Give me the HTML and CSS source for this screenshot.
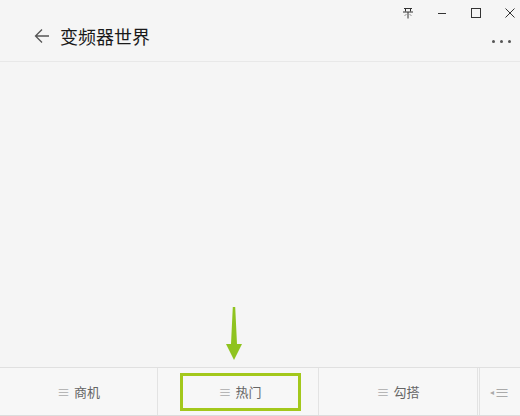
FILE: index.html
```html
<!DOCTYPE html>
<html lang="zh">
<head>
<meta charset="utf-8">
<link rel="stylesheet" href="styles.css">
</head>
<body>
<div class="window">
  <div class="titlebar">
    <span class="ctl">
      <svg width="12" height="12" viewBox="0 0 12 12"><path d="M2 1.5h8M3.5 1.5v3M8.5 1.5v3M1 5h10M6 5v6.5M4 7.5l-1 1M8 7.5l1 1" stroke="#333" stroke-width="1" fill="none"/></svg>
    </span>
    <span class="ctl">
      <svg width="12" height="12" viewBox="0 0 12 12"><path d="M2 6.5h8" stroke="#333" stroke-width="1"/></svg>
    </span>
    <span class="ctl">
      <svg width="12" height="12" viewBox="0 0 12 12"><rect x="1.5" y="1.5" width="9" height="9" stroke="#333" stroke-width="1" fill="none"/></svg>
    </span>
    <span class="ctl">
      <svg width="12" height="12" viewBox="0 0 12 12"><path d="M1.5 1.5l9 9M10.5 1.5l-9 9" stroke="#333" stroke-width="1"/></svg>
    </span>
  </div>
  <div class="header">
    <svg class="back" width="16" height="16" viewBox="0 0 16 16"><path d="M15 8H1.5M8 1.5L1.5 8L8 14.5" stroke="#555" stroke-width="1.3" fill="none"/></svg>
    <span class="title">变频器世界</span>
    <span class="more"><i></i><i></i><i></i></span>
  </div>
  <div class="content">
    <svg class="pointer" width="18" height="54" viewBox="0 0 18 54"><path d="M7.8 0h2.4l1.8 37H17L9 53L1 37h5Z" fill="#8fc31f"/></svg>
  </div>
  <div class="menubar">
    <div class="item"><span class="lines">≡</span>商机</div>
    <div class="item"><span class="hl"><span class="lines">≡</span>热门</span></div>
    <div class="item"><span class="lines">≡</span>勾搭</div>
    <div class="item kb"><span class="tri">◂</span><span class="lines">≡</span></div>
  </div>
</div>
</body>
</html>
```

FILE: styles.css
```css
* { box-sizing: border-box; }
html, body {
  margin: 0;
  padding: 0;
  width: 520px;
  height: 416px;
  overflow: hidden;
  background: #f5f5f5;
  font-family: "Noto Sans CJK SC", "Liberation Sans", sans-serif;
}
.window {
  display: flex;
  flex-direction: column;
  height: 416px;
}
.titlebar {
  height: 26px;
  display: flex;
  justify-content: flex-end;
  align-items: center;
  gap: 14px;
  padding-right: 0;
}
.ctl {
  width: 20px;
  display: flex;
  justify-content: center;
  align-items: center;
}
.ctl svg { display: block; }
.header {
  height: 36px;
  display: flex;
  align-items: center;
  padding-left: 34px;
  padding-right: 9px;
  border-bottom: 1px solid #e8e8e8;
  padding-bottom: 15px;
}
.back { display: block; margin-right: 10px; }
.title {
  font-size: 18px;
  color: #1a1a1a;
  line-height: 20px;
}
.more {
  margin-left: auto;
  display: flex;
  gap: 5px;
  margin-top: 10px;
}
.more i {
  width: 3px;
  height: 3px;
  border-radius: 50%;
  background: #555;
  display: block;
}
.content {
  flex: 1;
  position: relative;
}
.pointer {
  position: absolute;
  left: 225px;
  top: 245px;
}
.menubar {
  height: 49px;
  display: grid;
  grid-template-columns: 158px 161px 161px 1fr;
  border-top: 1px solid #e0e0e0;
  border-bottom: 1px solid #dcdcdc;
  background: #f7f7f7;
}
.item {
  display: flex;
  align-items: center;
  justify-content: center;
  font-size: 13px;
  color: #666;
  border-right: 1px solid #e3e3e3;
}
.item:nth-child(3) { border-right: 3px double #e3e3e3; }
.item.kb { border-right: none; }
.lines {
  color: #aaa;
  font-size: 13px;
  margin-right: 4px;
}
.hl {
  width: 121px;
  height: 38px;
  margin-left: 4px;
  border: 3px solid #a3c81c;
  display: flex;
  align-items: center;
  justify-content: center;
}
.tri { font-size: 8px; color: #aaa; }
.kb .lines { margin-right: 0; font-size: 15px; }
```
